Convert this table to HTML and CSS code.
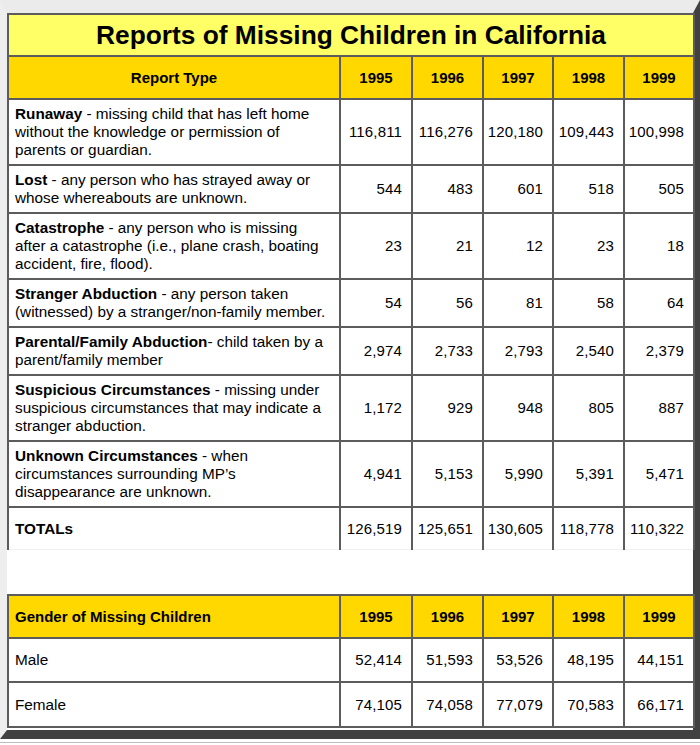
FILE: index.html
```html
<!DOCTYPE html>
<html>
<head>
<meta charset="utf-8">
<link rel="stylesheet" href="styles.css">
</head>
<body>
<div class="frame">
<table class="data">
  <colgroup>
    <col class="c-label"><col class="c-y1"><col class="c-y2"><col class="c-y3"><col class="c-y4"><col class="c-y5">
  </colgroup>
  <tr class="title-row"><td colspan="6" class="title">Reports of Missing Children in California</td></tr>
  <tr class="head-row">
    <th class="center">Report Type</th><th>1995</th><th>1996</th><th>1997</th><th>1998</th><th>1999</th>
  </tr>
  <tr>
    <td class="label"><b>Runaway</b> - missing child that has left home without the knowledge or permission of parents or guardian.</td>
    <td class="num">116,811</td><td class="num">116,276</td><td class="num">120,180</td><td class="num">109,443</td><td class="num">100,998</td>
  </tr>
  <tr>
    <td class="label"><b>Lost</b> - any person who has strayed away or whose whereabouts are unknown.</td>
    <td class="num">544</td><td class="num">483</td><td class="num">601</td><td class="num">518</td><td class="num">505</td>
  </tr>
  <tr>
    <td class="label"><b>Catastrophe</b> - any person who is missing after a catastrophe (i.e., plane crash, boating accident, fire, flood).</td>
    <td class="num">23</td><td class="num">21</td><td class="num">12</td><td class="num">23</td><td class="num">18</td>
  </tr>
  <tr>
    <td class="label"><b>Stranger Abduction</b> - any person taken (witnessed) by a stranger/non-family member.</td>
    <td class="num">54</td><td class="num">56</td><td class="num">81</td><td class="num">58</td><td class="num">64</td>
  </tr>
  <tr>
    <td class="label"><b>Parental/Family Abduction</b>- child taken by a parent/family member</td>
    <td class="num">2,974</td><td class="num">2,733</td><td class="num">2,793</td><td class="num">2,540</td><td class="num">2,379</td>
  </tr>
  <tr>
    <td class="label"><b>Suspicious Circumstances</b> - missing under suspicious circumstances that may indicate a stranger abduction.</td>
    <td class="num">1,172</td><td class="num">929</td><td class="num">948</td><td class="num">805</td><td class="num">887</td>
  </tr>
  <tr>
    <td class="label"><b>Unknown Circumstances</b> - when circumstances surrounding MP’s disappearance are unknown.</td>
    <td class="num">4,941</td><td class="num">5,153</td><td class="num">5,990</td><td class="num">5,391</td><td class="num">5,471</td>
  </tr>
  <tr class="single total-row">
    <td class="label"><b>TOTALs</b></td>
    <td class="num">126,519</td><td class="num">125,651</td><td class="num">130,605</td><td class="num">118,778</td><td class="num">110,322</td>
  </tr>
  <tr class="spacer-row"><td colspan="6" class="spacer"></td></tr>
  <tr class="head-row">
    <th class="left">Gender of Missing Children</th><th>1995</th><th>1996</th><th>1997</th><th>1998</th><th>1999</th>
  </tr>
  <tr class="single gender">
    <td class="label">Male</td>
    <td class="num">52,414</td><td class="num">51,593</td><td class="num">53,526</td><td class="num">48,195</td><td class="num">44,151</td>
  </tr>
  <tr class="single gender female">
    <td class="label">Female</td>
    <td class="num">74,105</td><td class="num">74,058</td><td class="num">77,079</td><td class="num">70,583</td><td class="num">66,171</td>
  </tr>
</table>
</div>
<div class="rule"></div>
</body>
</html>
```

FILE: styles.css
```css
html, body {
  margin: 0;
  padding: 0;
  background: #ffffff;
}

.frame {
  width: 686px;
  border-style: solid;
  border-width: 13px 7px 9px 7px;
  border-color: #ebebeb #414141 #414141 #eeeeee;
  padding-bottom: 2px;
  background: #ffffff;
}

.data {
  width: 686px;
  table-layout: fixed;
  border-collapse: collapse;
  font-family: "Liberation Sans", Arial, sans-serif;
  font-size: 15px;
  line-height: 18px;
  color: #000;
}

.c-label { width: 332px; }
.c-y1 { width: 72px; }
.c-y2 { width: 71px; }
.c-y3 { width: 70px; }
.c-y4 { width: 71px; }
.c-y5 { width: 70px; }

.data td,
.data th {
  border: 2px solid #5c5c5c;
  padding: 5px 7px;
  vertical-align: middle;
}

.title {
  background: #ffff66;
  text-align: center;
  font-weight: bold;
  font-size: 26.3px;
  line-height: 30px;
  height: 26px;
}

.head-row th {
  background: #ffd800;
  font-weight: bold;
  text-align: center;
  height: 31px;
}

.head-row th.left {
  text-align: left;
  padding-left: 6px;
}

.label {
  text-align: left;
  font-size: 15.3px;
  padding-left: 6px !important;
  padding-right: 10px !important;
}

.num {
  text-align: right;
  white-space: nowrap;
  padding-left: 2px !important;
  padding-right: 9px !important;
  letter-spacing: 0.15px;
}

.single td {
  height: 31px;
}

.gender td {
  height: 32px;
}

.female td {
  height: 33px;
}

.total-row td {
  border-bottom-color: #f0f0f0;
  border-bottom-width: 1px;
}

.spacer {
  height: 44px;
  padding: 0 !important;
  border-left: hidden !important;
  border-right: hidden !important;
  border-bottom: none !important;
  border-top: 1px solid #f0f0f0 !important;
}

.rule {
  height: 1px;
  margin-top: 3px;
  background: #bdbdbd;
}
```
